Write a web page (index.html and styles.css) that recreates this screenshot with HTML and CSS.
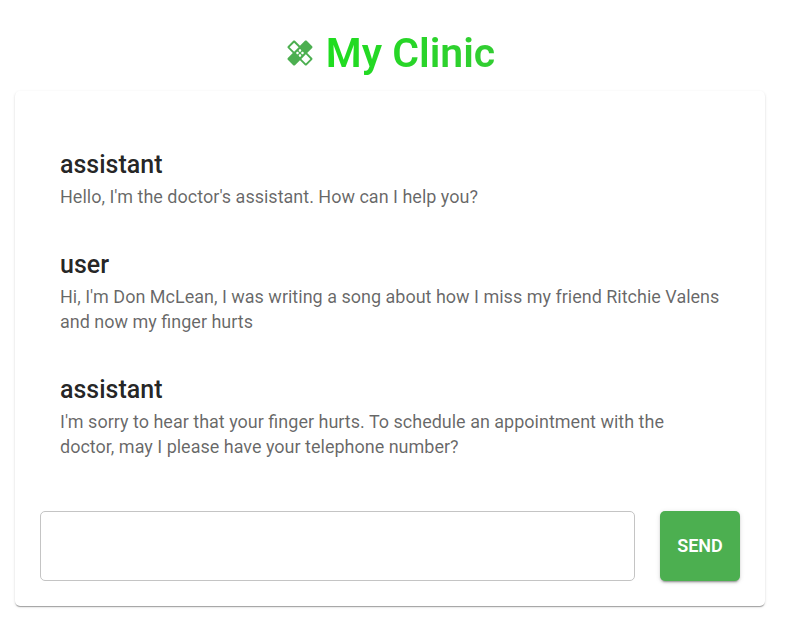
FILE: index.html
```html
<!DOCTYPE html>
<html lang="en">
<head>
<meta charset="utf-8">
<title>My Clinic</title>
<link rel="stylesheet" href="styles.css">
</head>
<body>
<header class="brand">
  <svg class="brand-icon" viewBox="0 0 24 24" aria-hidden="true"><path d="M17.73 12.02l3.98-3.98c.39-.39.39-1.02 0-1.41l-4.34-4.34c-.39-.39-1.02-.39-1.41 0l-3.98 3.98L8 2.29C7.8 2.1 7.55 2 7.29 2c-.25 0-.51.1-.7.29L2.25 6.63c-.39.39-.39 1.02 0 1.41l3.98 3.98L2.25 16c-.39.39-.39 1.02 0 1.41l4.34 4.34c.39.39 1.02.39 1.41 0l3.98-3.98 3.98 3.98c.2.2.45.29.71.29.26 0 .51-.1.71-.29l4.34-4.34c.39-.39.39-1.02 0-1.41l-3.99-3.98zM12 9c.55 0 1 .45 1 1s-.45 1-1 1-1-.45-1-1 .45-1 1-1zm-4.71 1.96L3.66 7.34l3.63-3.63 3.62 3.62-3.62 3.63zM10 13c-.55 0-1-.45-1-1s.45-1 1-1 1 .45 1 1-.45 1-1 1zm2 2c-.55 0-1-.45-1-1s.45-1 1-1 1 .45 1 1-.45 1-1 1zm2-4c.55 0 1 .45 1 1s-.45 1-1 1-1-.45-1-1 .45-1 1-1zm2.66 9.34l-3.63-3.62 3.63-3.63 3.62 3.62-3.62 3.63z"/></svg>
  <h1 class="brand-name">My Clinic</h1>
</header>
<main class="card">
  <ul class="messages">
    <li class="message"><h2 class="role">assistant</h2><p class="text">Hello, I'm the doctor's assistant. How can I help you?</p></li>
    <li class="message"><h2 class="role">user</h2><p class="text">Hi, I'm Don McLean, I was writing a song about how I miss my friend Ritchie Valens and now my finger hurts</p></li>
    <li class="message"><h2 class="role">assistant</h2><p class="text">I'm sorry to hear that your finger hurts. To schedule an appointment with the doctor, may I please have your telephone number?</p></li>
  </ul>
  <form class="composer">
    <input class="field" type="text" aria-label="Message">
    <button class="send" type="submit">Send</button>
  </form>
</main>
</body>
</html>
```

FILE: styles.css
```css
* { box-sizing: border-box; }
body {
  margin: 0;
  padding: 28px 28px 18px 15px;
  background: #fff;
  color: rgba(0, 0, 0, 0.87);
  font-family: Roboto, sans-serif;
}
.brand {
  display: flex;
  align-items: center;
  justify-content: center;
  gap: 11px;
  margin-bottom: 13px;
}
.brand-icon { width: 30px; height: 30px; fill: #4caf50; }
.brand-name {
  margin: 0;
  font-size: 41px;
  font-weight: 600;
  line-height: 50px;
  background: linear-gradient(90deg, #1fdd1f, #32cd32);
  background-clip: text;
  color: transparent;
}
.card {
  padding: 25px;
  border-radius: 5px;
  box-shadow: 0 2px 1px -1px rgba(0, 0, 0, 0.2), 0 1px 1px rgba(0, 0, 0, 0.14), 0 1px 3px rgba(0, 0, 0, 0.12);
}
.messages { margin: 0 0 25px; padding: 13px 0 7px; list-style: none; }
.message { padding: 20px; }
.role { margin: 0 0 4px; font-size: 25px; font-weight: 500; line-height: 31px; }
.text { margin: 0; font-size: 18px; line-height: 25px; color: rgba(0, 0, 0, 0.6); }
.composer { display: flex; gap: 25px; }
.field {
  flex: 1;
  min-width: 0;
  height: 70px;
  padding: 0 18px;
  border: 1px solid #c4c4c4;
  border-radius: 5px;
  background: #fff;
  font: 20px Roboto, sans-serif;
}
.send {
  width: 80px;
  height: 70px;
  padding: 0 0 2px;
  border: 0;
  border-radius: 5px;
  background: #4caf50;
  color: #fff;
  font: 600 18px Roboto, sans-serif;
  text-transform: uppercase;
  box-shadow: 0 3px 1px -2px rgba(0, 0, 0, 0.2), 0 2px 2px rgba(0, 0, 0, 0.14), 0 1px 5px rgba(0, 0, 0, 0.12);
}
```
